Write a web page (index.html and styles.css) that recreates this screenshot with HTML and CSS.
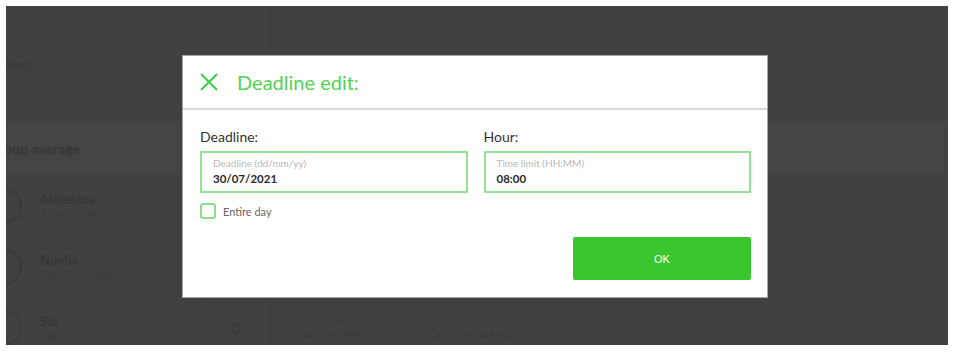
FILE: index.html
```html
<!DOCTYPE html>
<html lang="en">
<head>
    <meta charset="UTF-8">
    <meta name="viewport" content="width=device-width, initial-scale=1.0">
    <title>Deadline edit</title>
    <link rel="stylesheet" href="styles.css">
</head>
<body>

    <div class="screen">
        <!-- Page behind the overlay -->
        <div class="page">
            <div class="cell head first"><span class="cut">Students</span></div>
            <div class="cell head line"></div>
            <div class="cell head line"></div>
            <div class="cell head"></div>
            <div class="cell head"></div>

            <div class="cell avg first"><span class="cut bold">Group average</span></div>
            <div class="cell avg line"></div>
            <div class="cell avg line"></div>
            <div class="cell avg"></div>
            <div class="cell avg"></div>

            <div class="cell first student">
                <span class="avatar"></span>
                <div><div class="name">Alejandra</div><div class="surname">Alzate Duarte</div></div>
            </div>
            <div class="cell line"></div>
            <div class="cell line"></div>
            <div class="cell"></div>
            <div class="cell"></div>

            <div class="cell first student">
                <span class="avatar"></span>
                <div><div class="name">Noelia</div><div class="surname">Carracero Yagüe</div></div>
            </div>
            <div class="cell line"></div>
            <div class="cell line"></div>
            <div class="cell"></div>
            <div class="cell"></div>

            <div class="cell first student">
                <span class="avatar"></span>
                <div><div class="name">Sui</div><div class="surname">Chen</div></div>
            </div>
            <div class="cell line score">0</div>
            <div class="cell line task"><span>-</span><span class="late">NOT DELIVERED</span></div>
            <div class="cell task"><span>-</span><span class="late">NOT DELIVERED</span></div>
            <div class="cell"></div>
        </div>

        <!-- Fenêtre modale -->
        <div class="modal">
            <div class="modal-header">
                <svg class="close" width="18" height="18" viewBox="0 0 18 18">
                    <path d="M1 1 L17 17 M17 1 L1 17" stroke="#3fcf3f" stroke-width="2" fill="none"/>
                </svg>
                <h2>Deadline edit:</h2>
            </div>
            <div class="modal-body">
                <div class="fields">
                    <div class="field">
                        <label>Deadline:</label>
                        <div class="input-box">
                            <span class="hint">Deadline (dd/mm/yy)</span>
                            <span class="value">30/07/2021</span>
                        </div>
                    </div>
                    <div class="field">
                        <label>Hour:</label>
                        <div class="input-box">
                            <span class="hint">Time limit (HH:MM)</span>
                            <span class="value">08:00</span>
                        </div>
                    </div>
                </div>
                <div class="check-row">
                    <span class="checkbox"></span>
                    <span class="check-label">Entire day</span>
                </div>
                <div class="actions">
                    <button type="button" class="ok-button">OK</button>
                </div>
            </div>
        </div>
    </div>

</body>
</html>
```

FILE: styles.css
```css
body {
    margin: 0;
    padding: 6px 7px 7px 6px;
    background-color: #ffffff;
    font-family: 'Lato', 'Liberation Sans', sans-serif;
}

.screen {
    position: relative;
    width: 942px;
    height: 339px;
    background-color: #414141; /* page assombrie par l'overlay */
    overflow: hidden;
}

/* Tableau en arrière-plan, à peine visible */
.page {
    display: grid;
    grid-template-columns: 194px 70px 135px 135px 1fr;
    grid-template-rows: 116px 53px 61px 61px 61px;
    color: #363636;
}

.cell {
    display: flex;
    align-items: center;
}

.cell.line {
    border-left: 1px solid #3d3d3d;
}

.cell.avg {
    background-color: #444442;
}

.cut {
    margin-left: -22px;
    font-size: 14px;
    color: #393939;
}

.cut.bold {
    margin-left: -17px;
    font-weight: bold;
    color: #363636;
}

.student {
    gap: 18px;
    margin-left: -20px;
}

.avatar {
    width: 32px;
    height: 32px;
    border-radius: 50%;
    border: 2px solid #3a3a3a;
}

.name {
    font-size: 13px;
    font-weight: bold;
}

.surname {
    font-size: 11px;
    color: #3b3b3b;
}

.score {
    justify-content: center;
    font-weight: bold;
    color: #393939;
}

.task {
    flex-direction: column;
    justify-content: center;
    gap: 4px;
    font-size: 9px;
    font-weight: bold;
    color: #393939;
}

.late {
    color: #443939;
}

/* Modale */
.modal {
    position: absolute;
    left: 176px;
    top: 49px;
    width: 586px;
    box-sizing: border-box;
    background-color: white;
    border: 1px solid #a5a5a5;
}

.modal-header {
    display: flex;
    align-items: center;
    gap: 19px;
    height: 52px;
    padding-left: 17px;
    border-bottom: 2px solid #d7d7d7;
}

.modal-header h2 {
    margin: 0;
    font-size: 20px;
    font-weight: normal;
    color: #52d452;
}

.modal-body {
    padding: 18px 16px 17px 17px;
}

.fields {
    display: grid;
    grid-template-columns: 1fr 1fr;
    gap: 16px;
}

.field label {
    display: block;
    font-size: 14px;
    line-height: 18px;
    color: #333333;
    margin-bottom: 5px;
}

.input-box {
    height: 42px;
    box-sizing: border-box;
    border: 2px solid #95e295;
    padding: 4px 11px 0;
    display: flex;
    flex-direction: column;
}

.hint {
    font-size: 10px;
    line-height: 12px;
    color: #b8b8b8;
}

.value {
    margin-top: 3px;
    font-size: 11.5px;
    font-weight: bold;
    color: #2a2a2a;
}

.check-row {
    display: flex;
    align-items: center;
    gap: 7px;
    margin-top: 10px;
    height: 16px;
}

.checkbox {
    width: 16px;
    height: 16px;
    box-sizing: border-box;
    border: 2px solid #8bdc8b;
    border-radius: 3px;
}

.check-label {
    font-size: 11px;
    color: #666666;
}

.actions {
    display: flex;
    justify-content: flex-end;
    margin-top: 18px;
}

.ok-button {
    width: 178px;
    height: 43px;
    border: none;
    border-radius: 2px;
    background-color: #3ac62e; /* vert du bouton de validation */
    color: white;
    font-family: 'Liberation Sans', sans-serif;
    font-size: 11px;
}
```
